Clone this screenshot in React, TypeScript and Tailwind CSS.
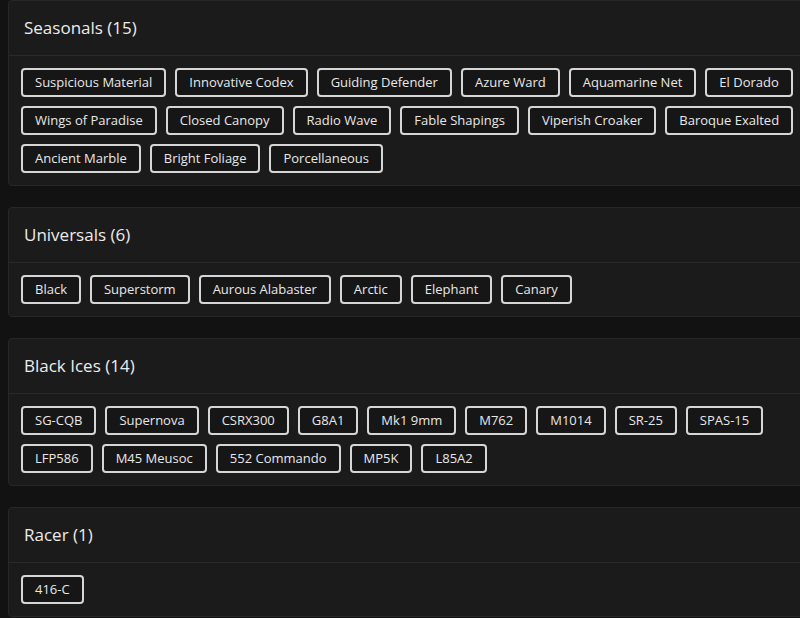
const groups: { title: string; items: string[] }[] = [
  {
    title: "Seasonals",
    items: [
      "Suspicious Material",
      "Innovative Codex",
      "Guiding Defender",
      "Azure Ward",
      "Aquamarine Net",
      "El Dorado",
      "Wings of Paradise",
      "Closed Canopy",
      "Radio Wave",
      "Fable Shapings",
      "Viperish Croaker",
      "Baroque Exalted",
      "Ancient Marble",
      "Bright Foliage",
      "Porcellaneous",
    ],
  },
  {
    title: "Universals",
    items: ["Black", "Superstorm", "Aurous Alabaster", "Arctic", "Elephant", "Canary"],
  },
  {
    title: "Black Ices",
    items: [
      "SG-CQB",
      "Supernova",
      "CSRX300",
      "G8A1",
      "Mk1 9mm",
      "M762",
      "M1014",
      "SR-25",
      "SPAS-15",
      "LFP586",
      "M45 Meusoc",
      "552 Commando",
      "MP5K",
      "L85A2",
    ],
  },
  {
    title: "Racer",
    items: ["416-C"],
  },
];

const App = () => {
  return (
    <div
      className="h-[618px] w-[800px] overflow-hidden bg-[#121212] pl-2"
      style={{ fontFamily: '"Open Sans", "Noto Sans", sans-serif' }}
    >
      <div className="flex w-[830px] flex-col gap-[21px]">
        { groups.map((group) => (
          <section
            key={ group.title }
            className="rounded-sm border border-[#272727] bg-[#1b1b1b]"
          >
            <div className="flex h-[55px] items-center border-b border-[#2a2a2a] px-[15px]">
              <h2 className="text-[17px] font-medium text-[#ececec]">
                { group.title } ({ group.items.length })
              </h2>
            </div>
            <div className="flex w-[800px] flex-wrap gap-x-[9px] gap-y-[9px] p-3">
              { group.items.map((item) => (
                <span
                  key={ item }
                  className="rounded-[4px] border-2 border-[#d6d6d6] bg-[#161616] px-3 py-[4px] text-[13px] leading-[17px] text-[#e8e8e8]"
                >
                  { item }
                </span>
              )) }
            </div>
          </section>
        )) }
      </div>
    </div>
  );
};

export default App;
